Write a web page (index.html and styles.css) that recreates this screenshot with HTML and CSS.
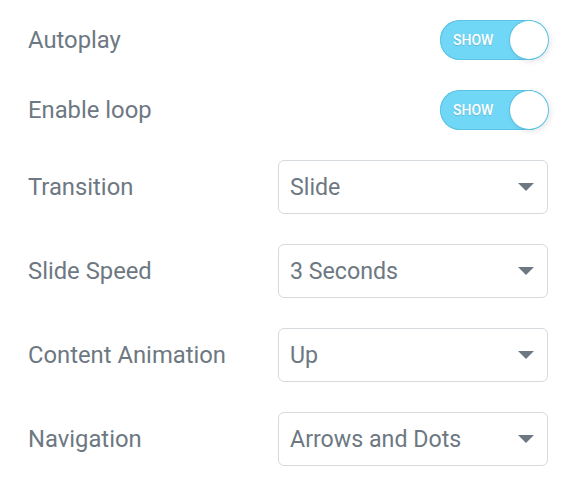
FILE: index.html
```html
<!DOCTYPE html>
<html>
<head>
<meta charset="utf-8">
<link rel="stylesheet" href="styles.css">
</head>
<body>
<div class="panel">
  <div class="row row-toggle">
    <span class="label">Autoplay</span>
    <div class="toggle"><span class="toggle-text">SHOW</span><span class="knob"></span></div>
  </div>
  <div class="row row-toggle">
    <span class="label">Enable loop</span>
    <div class="toggle"><span class="toggle-text">SHOW</span><span class="knob"></span></div>
  </div>
  <div class="row row-select">
    <span class="label">Transition</span>
    <div class="select"><span>Slide</span><span class="caret"></span></div>
  </div>
  <div class="row row-select">
    <span class="label">Slide Speed</span>
    <div class="select"><span>3 Seconds</span><span class="caret"></span></div>
  </div>
  <div class="row row-select">
    <span class="label">Content Animation</span>
    <div class="select"><span>Up</span><span class="caret"></span></div>
  </div>
  <div class="row row-select">
    <span class="label">Navigation</span>
    <div class="select"><span>Arrows and Dots</span><span class="caret"></span></div>
  </div>
</div>
</body>
</html>
```
FILE: styles.css
```css
html, body {
  margin: 0;
  padding: 0;
  background: #ffffff;
}
.panel {
  font-family: Roboto, "Liberation Sans", sans-serif;
  color: #6d7882;
  padding: 20px 24px 0 28px;
  display: flex;
  flex-direction: column;
  gap: 30px;
}
.row {
  display: flex;
  align-items: center;
  justify-content: space-between;
}
.row-toggle { height: 40px; }
.row-select { height: 54px; }
.label {
  font-size: 23.8px;
  line-height: 1;
  padding-top: 2px;
}
.toggle {
  width: 108px;
  height: 40px;
  box-sizing: border-box;
  border-radius: 20px;
  background: #71d7f7;
  box-shadow: inset 0 0 0 1px #5bc3e3;
  position: relative;
  display: flex;
  align-items: center;
}
.toggle-text {
  color: #ffffff;
  font-size: 14px;
  font-weight: 500;
  margin-left: 13px;
  text-shadow: 0 1px 1px rgba(0,0,0,0.15);
}
.knob {
  position: absolute;
  right: 0;
  top: 1px;
  width: 38px;
  height: 38px;
  border-radius: 50%;
  background: #ffffff;
  box-shadow: 0 0 0 1px #5bc3e3, 2px 2px 6px rgba(0,0,0,0.12);
}
.select {
  width: 270px;
  height: 54px;
  box-sizing: border-box;
  border: 1px solid #d5dadf;
  border-radius: 6px;
  display: flex;
  align-items: center;
  justify-content: space-between;
  padding: 0 13px 0 11px;
  font-size: 23.2px;
}
.caret {
  width: 0;
  height: 0;
  border-left: 8px solid transparent;
  border-right: 8px solid transparent;
  border-top: 8px solid #6d7882;
}
```
